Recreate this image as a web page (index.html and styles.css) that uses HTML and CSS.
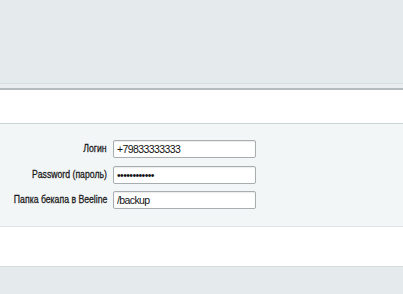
FILE: index.html
```html
<!DOCTYPE html>
<html lang="ru">
<head>
<meta charset="utf-8">
<title>Beeline backup</title>
<link rel="stylesheet" href="styles.css">
</head>
<body>
<div class="page">
  <div class="header"></div>
  <div class="header-band"></div>
  <div class="spacer-top"></div>
  <div class="form-area">
    <div class="form">
      <div class="row">
        <label class="label" for="login"><span class="label-text">Логин</span></label>
        <input class="field" id="login" type="text" value="+79833333333">
      </div>
      <div class="row">
        <label class="label" for="pass"><span class="label-text">Password (пароль)</span></label>
        <input class="field" id="pass" type="password" value="123456789012">
      </div>
      <div class="row">
        <label class="label" for="folder"><span class="label-text">Папка бекапа в Beeline</span></label>
        <input class="field" id="folder" type="text" value="/backup">
      </div>
    </div>
  </div>
  <div class="spacer-bottom"></div>
  <div class="footer"></div>
</div>
</body>
</html>
```
FILE: styles.css
```css
html, body {
  margin: 0;
  padding: 0;
  background: #ffffff;
}
body {
  font-family: "Liberation Sans", Arial, sans-serif;
  font-size: 10px;
  color: #222222;
}
.page {
  display: flex;
  flex-direction: column;
  height: 294px;
  overflow: hidden;
}
.header {
  height: 83px;
  background: #e5eaec;
  border-bottom: 1px solid #d7dee1;
  flex: none;
}
.header-band {
  height: 4px;
  background: #e9edef;
  border-bottom: 2px solid #b5bcbf;
  flex: none;
}
.spacer-top {
  height: 33px;
  background: #ffffff;
  border-bottom: 1px solid #cbd2d5;
  flex: none;
}
.form-area {
  height: 103px;
  background: #f3f6f7;
  border-bottom: 1px solid #e0e6e8;
  flex: none;
  box-sizing: border-box;
  padding-top: 16px;
}
.form {
  display: flex;
  flex-direction: column;
  gap: 7.5px;
}
.row {
  display: flex;
  align-items: flex-start;
  gap: 6px;
}
.label {
  flex: none;
  width: 107px;
  display: flex;
  justify-content: flex-end;
  padding-top: 2px;
  line-height: 12px;
  white-space: nowrap;
}
.label-text {
  flex: none;
  display: inline-block;
  font-size: 11px;
  color: #1a1a1a;
  transform: scaleX(0.79);
  transform-origin: right center;
  -webkit-text-stroke: 0.3px #1a1a1a;
}
.field {
  box-sizing: border-box;
  width: 143px;
  height: 18px;
  margin: 0;
  padding: 0 3px;
  border: 1px solid #a8adb0;
  border-radius: 2px;
  background: #ffffff;
  box-shadow: inset 0 1px 1px rgba(0, 0, 0, 0.08);
  font-family: "Liberation Sans", Arial, sans-serif;
  font-size: 10.5px;
  letter-spacing: -0.6px;
  color: #111111;
  outline: none;
}
.spacer-bottom {
  height: 39px;
  background: #ffffff;
  border-bottom: 1px solid #d5dcdf;
  flex: none;
}
.footer {
  flex: 1;
  background: #e5eaec;
}
```
